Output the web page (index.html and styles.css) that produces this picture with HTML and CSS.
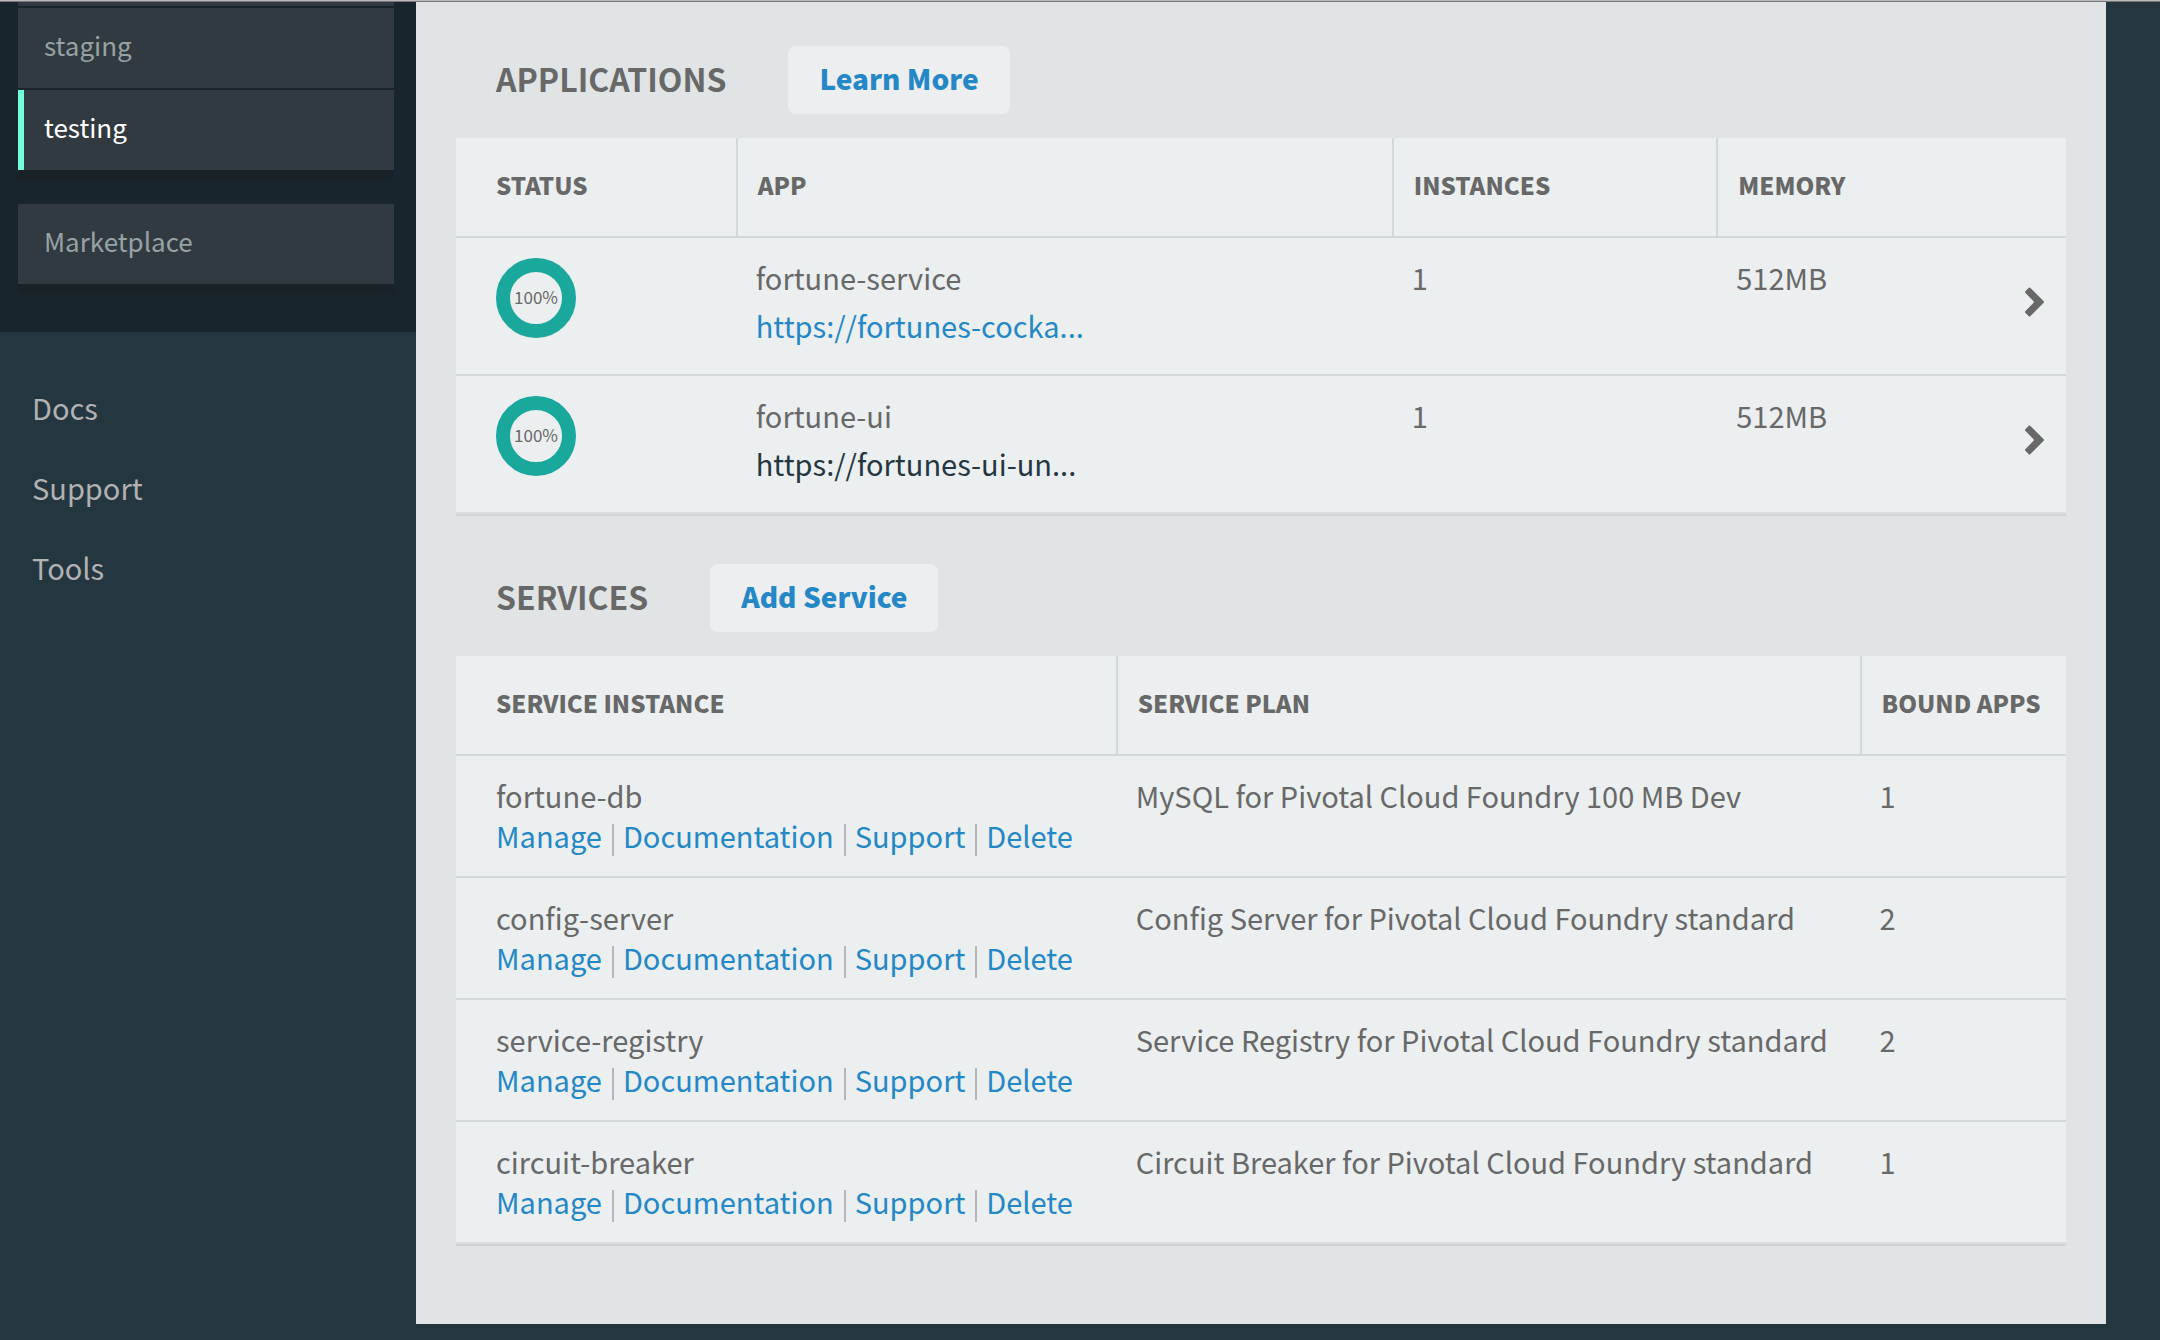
FILE: index.html
```html
<!DOCTYPE html>
<html lang="en">
<head>
<meta charset="utf-8">
<title>testing</title>
<link rel="stylesheet" href="styles.css">
</head>
<body>
<div class="layout">
  <aside class="sidebar">
    <nav class="spaces">
      <ul class="group">
        <li class="group-edge"></li>
        <li><a class="item" href="#">staging</a></li>
        <li><a class="item item-active" href="#">testing</a></li>
      </ul>
      <ul class="group">
        <li><a class="item" href="#">Marketplace</a></li>
      </ul>
    </nav>
    <nav class="links">
      <a href="#">Docs</a>
      <a href="#">Support</a>
      <a href="#">Tools</a>
    </nav>
  </aside>
  <main class="panel">
    <section>
      <header class="section-head">
        <h2>APPLICATIONS</h2>
        <button class="action" type="button">Learn More</button>
      </header>
      <table class="grid apps">
        <colgroup><col class="c-status"><col class="c-app"><col class="c-inst"><col></colgroup>
        <thead>
          <tr><th>STATUS</th><th>APP</th><th>INSTANCES</th><th>MEMORY</th></tr>
        </thead>
        <tbody>
          <tr>
            <td><span class="ring">100%</span></td>
            <td>fortune-service<a class="route" href="#">https://fortunes-cocka...</a></td>
            <td>1</td>
            <td><div class="memory"><span>512MB</span><svg class="chevron" viewBox="0 0 19 30"><path d="M1 5 L4.500 1.500 L18 15 L4.500 28.500 L1 25 L10.500 15 Z" /></svg></div></td>
          </tr>
          <tr>
            <td><span class="ring">100%</span></td>
            <td>fortune-ui<a class="route route-hover" href="#">https://fortunes-ui-un...</a></td>
            <td>1</td>
            <td><div class="memory"><span>512MB</span><svg class="chevron" viewBox="0 0 19 30"><path d="M1 5 L4.500 1.500 L18 15 L4.500 28.500 L1 25 L10.500 15 Z" /></svg></div></td>
          </tr>
        </tbody>
      </table>
    </section>
    <section>
      <header class="section-head">
        <h2>SERVICES</h2>
        <button class="action" type="button">Add Service</button>
      </header>
      <table class="grid services">
        <colgroup><col class="c-service"><col class="c-plan"><col></colgroup>
        <thead>
          <tr><th>SERVICE INSTANCE</th><th>SERVICE PLAN</th><th>BOUND APPS</th></tr>
        </thead>
        <tbody>
          <tr>
            <td>fortune-db<div class="actions"><a href="#">Manage</a><a href="#">Documentation</a><a href="#">Support</a><a href="#">Delete</a></div></td>
            <td>MySQL for Pivotal Cloud Foundry 100 MB Dev</td>
            <td>1</td>
          </tr>
          <tr>
            <td>config-server<div class="actions"><a href="#">Manage</a><a href="#">Documentation</a><a href="#">Support</a><a href="#">Delete</a></div></td>
            <td>Config Server for Pivotal Cloud Foundry standard</td>
            <td>2</td>
          </tr>
          <tr>
            <td>service-registry<div class="actions"><a href="#">Manage</a><a href="#">Documentation</a><a href="#">Support</a><a href="#">Delete</a></div></td>
            <td>Service Registry for Pivotal Cloud Foundry standard</td>
            <td>2</td>
          </tr>
          <tr>
            <td>circuit-breaker<div class="actions"><a href="#">Manage</a><a href="#">Documentation</a><a href="#">Support</a><a href="#">Delete</a></div></td>
            <td>Circuit Breaker for Pivotal Cloud Foundry standard</td>
            <td>1</td>
          </tr>
        </tbody>
      </table>
    </section>
  </main>
</div>
</body>
</html>
```
FILE: styles.css
```css
* { box-sizing: border-box; }

body {
  margin: 0;
  background: #243640;
  color: #686868;
  font-family: "Noto Sans CJK SC", "Noto Sans", sans-serif;
  font-size: 29px;
  line-height: 40px;
}

a { color: #2487c6; text-decoration: none; }
ul { list-style: none; margin: 0; padding: 0; }

.layout {
  display: flex;
  border-top: 1px solid #bbb;
  padding: 0 54px 16px 0;
  min-height: 100vh;
  box-shadow: inset 0 1px 0 #777;
}
.sidebar, .panel { margin-top: 1px; }

/* Sidebar */
.sidebar { flex: 0 0 416px; }

.spaces {
  display: flex;
  flex-direction: column;
  gap: 34px;
  padding: 0 22px 48px 18px;
  background: #19252c;
}
.group {
  display: flex;
  flex-direction: column;
  gap: 2px;
  box-shadow: 0 10px 0 #182227;
}
.group-edge { height: 4px; background: #313a40; }
.item {
  display: block;
  height: 80px;
  padding-left: 26px;
  background: #313a40;
  color: #98a2a4;
  font-size: 26px;
  line-height: 74px;
}
.item-active {
  border-left: 6px solid #73ffdc;
  padding-left: 20px;
  color: #fff;
}

.links { display: flex; flex-direction: column; padding-top: 35px; }
.links a { padding-left: 32px; color: #b2b2b2; line-height: 80px; }

/* Content */
.panel {
  flex: 1;
  padding: 44px 40px 78px;
  background: #e0e4e5;
}
.section-head {
  display: flex;
  align-items: center;
  gap: 62px;
  padding: 0 40px 24px;
}
section + section { padding-top: 50px; }
h2 { margin: 0; padding-bottom: 4px; font-size: 32px; line-height: 40px; }

.action {
  height: 68px;
  padding: 0 31px 4px;
  border: 0;
  border-radius: 8px;
  background: #eceef0;
  color: #2487c6;
  font: 900 28px/40px "Noto Sans CJK SC", "Noto Sans", sans-serif;
}

.grid {
  width: 100%;
  table-layout: fixed;
  border-spacing: 0;
  background: #ebeff0;
  box-shadow: 0 2px 0 #d0d4d5;
}
.grid th {
  height: 100px;
  padding: 0 20px 4px;
  border-bottom: 2px solid #d3d8da;
  border-right: 2px solid #d3d8da;
  font-size: 24px;
  font-weight: 900;
  text-align: left;
  white-space: nowrap;
}
.grid th:last-child { border-right: 0; }
.grid td {
  padding: 19px 18px;
  border-bottom: 2px solid #d3d8da;
  vertical-align: top;
}
.grid th:first-child, .grid td:first-child { padding-left: 40px; }
.grid tr:last-child td { border-bottom-color: #dbdfe0; }

.c-status { width: 17.5%; }
.c-app { width: 40.75%; }
.c-inst { width: 20.15%; }
.c-service { width: 41.1%; }
.c-plan { width: 46.2%; }

.apps td { height: 138px; }
.apps td:first-child { padding-top: 20px; }
.services td { height: 122px; }

.ring {
  display: block;
  width: 80px;
  height: 80px;
  border: 14px solid #1aa79c;
  border-radius: 50%;
  font-size: 17px;
  line-height: 50px;
  text-align: center;
}
.route { display: block; line-height: 56px; }
.route-hover { color: #243640; }

.memory { display: flex; justify-content: space-between; align-items: flex-start; }
.chevron { width: 19px; height: 30px; margin: 30px 4px 0 0; }
.chevron path { fill: #686868; stroke: #686868; stroke-width: 2; stroke-linejoin: round; }

.actions { display: flex; align-items: center; padding-top: 9px; }
.actions a { padding-bottom: 10px; line-height: 22px; }
.actions a + a { margin-left: 10px; padding-left: 9px; border-left: 2px solid #b4b6b7; }
```
